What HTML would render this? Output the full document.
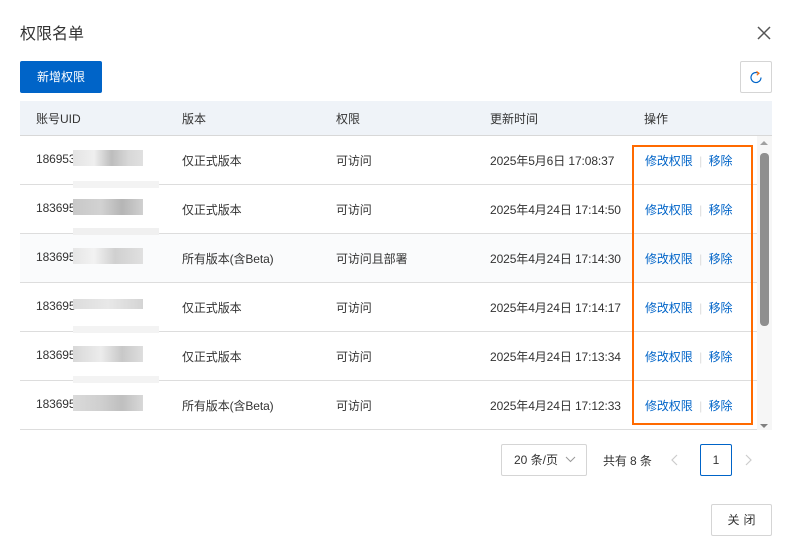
<!DOCTYPE html>
<html><head><meta charset="utf-8">
<style>
*{box-sizing:border-box;margin:0;padding:0}
body{width:786px;height:548px;background:#fff;font-family:"Liberation Sans","Noto Sans CJK SC",sans-serif;color:#333;position:relative;overflow:hidden;font-size:12px}
.abs{position:absolute}
.title{left:20px;top:20px;font-size:16px;color:#333}
.btn{left:20px;top:61px;width:82px;height:32px;background:#0064c8;color:#fff;border-radius:2px;font-size:12px;text-align:center;line-height:32px}
.ref{left:740px;top:61px;width:32px;height:32px;border:1px solid #d5d5d5;border-radius:2px}
.thead{left:20px;top:101px;width:752px;height:35px;background:#eff3f8;border-bottom:1px solid #d8d8d8}
.th{top:110px;font-size:12px;color:#333}
.row{left:20px;width:737px;height:49px;border-bottom:1px solid #ddd;background:#fff}
.cell{font-size:12px;color:#333;letter-spacing:-0.1px}
.link{color:#0064c8}
.sep{color:#ddd}
.blur{left:73px;width:70px;height:16px}
.orange{left:632px;top:145px;width:121px;height:280px;border:2px solid #ff6a00}
.track{left:757px;top:136px;width:15px;height:294px;background:#f6f6f6}
.thumb{left:760px;top:153px;width:9px;height:173px;background:#8f8f8f;border-radius:4px}
.sel{left:501px;top:444px;width:86px;height:32px;border:1px solid #d5d5d5;border-radius:2px;line-height:30px;padding-left:12px}
.pg{left:700px;top:444px;width:32px;height:32px;border:1px solid #0064c8;border-radius:2px;text-align:center;line-height:30px}
.close{left:711px;top:504px;width:61px;height:32px;border:1px solid #d5d5d5;border-radius:2px;text-align:center;line-height:30px;letter-spacing:4px;padding-left:4px}
</style></head><body>
<div class="abs title">权限名单</div>
<svg class="abs" style="left:756px;top:25px" width="16" height="16" viewBox="0 0 16 16"><path d="M2 2L14 14M14 2L2 14" stroke="#555" stroke-width="1.5"/></svg>
<div class="abs btn">新增权限</div>
<div class="abs ref"><svg style="position:absolute;left:9px;top:9px" width="13" height="13" viewBox="0 0 13 13"><path d="M8.5 2.2A5 5 0 1 0 11 6.5" fill="none" stroke="#0064c8" stroke-width="1.2"/><path d="M6.5 0.5L9 2.3L6.8 4.2" fill="none" stroke="#ff6a00" stroke-width="1.1"/></svg></div>
<div class="abs thead"></div>
<div class="abs th" style="left:36px">账号UID</div>
<div class="abs th" style="left:182px">版本</div>
<div class="abs th" style="left:336px">权限</div>
<div class="abs th" style="left:490px">更新时间</div>
<div class="abs th" style="left:644px">操作</div>

<div class="abs row" style="top:136px"></div>
<div class="abs row" style="top:185px"></div>
<div class="abs row" style="top:234px;background:#fafbfc"></div>
<div class="abs row" style="top:283px"></div>
<div class="abs row" style="top:332px"></div>
<div class="abs row" style="top:381px"></div>

<div class="abs cell" style="left:36px;top:152px">186953</div>
<div class="abs cell" style="left:36px;top:201px">183695</div>
<div class="abs cell" style="left:36px;top:250px">183695</div>
<div class="abs cell" style="left:36px;top:299px">183695</div>
<div class="abs cell" style="left:36px;top:348px">183695</div>
<div class="abs cell" style="left:36px;top:397px">183695</div>

<div class="abs blur" style="top:150px;background:linear-gradient(90deg,#e4e4e4,#efefef 30%,#bdbdbd 55%,#d8d8d8 80%,#e0e0e0)"></div>
<div class="abs" style="left:73px;top:181px;width:86px;height:7px;background:#f3f3f3"></div>
<div class="abs blur" style="top:199px;background:linear-gradient(90deg,#c8c8c8,#d2d2d2 40%,#b5b5b5 70%,#d0d0d0)"></div>
<div class="abs" style="left:73px;top:228px;width:86px;height:7px;background:#f0f0f0"></div>
<div class="abs blur" style="top:248px;background:linear-gradient(90deg,#e6e6e6,#f2f2f2 30%,#d0d0d0 60%,#e0e0e0)"></div>
<div class="abs blur" style="top:299px;height:10px;background:linear-gradient(90deg,#dcdcdc,#e8e8e8 50%,#d4d4d4)"></div>
<div class="abs" style="left:73px;top:326px;width:86px;height:7px;background:#f3f3f3"></div>
<div class="abs blur" style="top:346px;background:linear-gradient(90deg,#d8d8d8,#ececec 40%,#c8c8c8 70%,#dedede)"></div>
<div class="abs" style="left:73px;top:376px;width:86px;height:7px;background:#f3f3f3"></div>
<div class="abs blur" style="top:395px;background:linear-gradient(90deg,#dadada,#cfcfcf 40%,#bfbfbf 70%,#d8d8d8)"></div>

<div class="abs cell" style="left:182px;top:152px">仅正式版本</div>
<div class="abs cell" style="left:182px;top:201px">仅正式版本</div>
<div class="abs cell" style="left:182px;top:250px">所有版本(含Beta)</div>
<div class="abs cell" style="left:182px;top:299px">仅正式版本</div>
<div class="abs cell" style="left:182px;top:348px">仅正式版本</div>
<div class="abs cell" style="left:182px;top:397px">所有版本(含Beta)</div>

<div class="abs cell" style="left:336px;top:152px">可访问</div>
<div class="abs cell" style="left:336px;top:201px">可访问</div>
<div class="abs cell" style="left:336px;top:250px">可访问且部署</div>
<div class="abs cell" style="left:336px;top:299px">可访问</div>
<div class="abs cell" style="left:336px;top:348px">可访问</div>
<div class="abs cell" style="left:336px;top:397px">可访问</div>

<div class="abs cell" style="left:490px;top:152px">2025年5月6日 17:08:37</div>
<div class="abs cell" style="left:490px;top:201px">2025年4月24日 17:14:50</div>
<div class="abs cell" style="left:490px;top:250px">2025年4月24日 17:14:30</div>
<div class="abs cell" style="left:490px;top:299px">2025年4月24日 17:14:17</div>
<div class="abs cell" style="left:490px;top:348px">2025年4月24日 17:13:34</div>
<div class="abs cell" style="left:490px;top:397px">2025年4月24日 17:12:33</div>

<div class="abs cell" style="left:645px;top:152px"><span class="link">修改权限</span> <span class="sep">&nbsp;|&nbsp;</span> <span class="link">移除</span></div>
<div class="abs cell" style="left:645px;top:201px"><span class="link">修改权限</span> <span class="sep">&nbsp;|&nbsp;</span> <span class="link">移除</span></div>
<div class="abs cell" style="left:645px;top:250px"><span class="link">修改权限</span> <span class="sep">&nbsp;|&nbsp;</span> <span class="link">移除</span></div>
<div class="abs cell" style="left:645px;top:299px"><span class="link">修改权限</span> <span class="sep">&nbsp;|&nbsp;</span> <span class="link">移除</span></div>
<div class="abs cell" style="left:645px;top:348px"><span class="link">修改权限</span> <span class="sep">&nbsp;|&nbsp;</span> <span class="link">移除</span></div>
<div class="abs cell" style="left:645px;top:397px"><span class="link">修改权限</span> <span class="sep">&nbsp;|&nbsp;</span> <span class="link">移除</span></div>

<div class="abs track"></div>
<svg class="abs" style="left:759px;top:140px" width="10" height="6"><path d="M1 5L5 1L9 5Z" fill="#a0a0a0"/></svg>
<svg class="abs" style="left:759px;top:423px" width="10" height="6"><path d="M1 1L5 5L9 1Z" fill="#808080"/></svg>
<div class="abs thumb"></div>
<div class="abs orange"></div>

<div class="abs sel">20 条/页 <svg style="position:absolute;left:63px;top:11px" width="11" height="7"><path d="M1 1L5.5 5.5L10 1" fill="none" stroke="#999" stroke-width="1"/></svg></div>
<div class="abs cell" style="left:603px;top:452px">共有 8 条</div>
<svg class="abs" style="left:671px;top:454px" width="8" height="12"><path d="M6 1L1 6L6 11" fill="none" stroke="#ccc" stroke-width="1.2"/></svg>
<div class="abs pg">1</div>
<svg class="abs" style="left:744px;top:454px" width="8" height="12"><path d="M2 1L7 6L2 11" fill="none" stroke="#ccc" stroke-width="1.2"/></svg>
<div class="abs close">关闭</div>
</body></html>
